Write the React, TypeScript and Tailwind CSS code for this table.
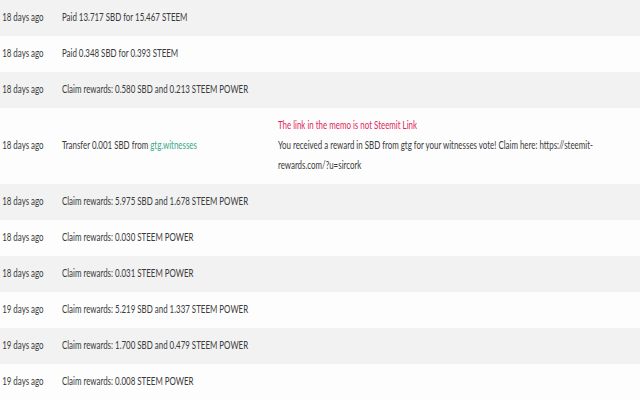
const ROWS = [
  { when: "18 days ago", text: "Paid 13.717 SBD for 15.467 STEEM" },
  { when: "18 days ago", text: "Paid 0.348 SBD for 0.393 STEEM" },
  { when: "18 days ago", text: "Claim rewards: 0.580 SBD and 0.213 STEEM POWER" },
  { when: "18 days ago", text: "Transfer 0.001 SBD from ", link: "gtg.witnesses", memo: true },
  { when: "18 days ago", text: "Claim rewards: 5.975 SBD and 1.678 STEEM POWER" },
  { when: "18 days ago", text: "Claim rewards: 0.030 STEEM POWER" },
  { when: "18 days ago", text: "Claim rewards: 0.031 STEEM POWER" },
  { when: "19 days ago", text: "Claim rewards: 5.219 SBD and 1.337 STEEM POWER" },
  { when: "19 days ago", text: "Claim rewards: 1.700 SBD and 0.479 STEEM POWER" },
  { when: "19 days ago", text: "Claim rewards: 0.008 STEEM POWER" },
];

// the history table is drawn narrow, so lay it out wide and squeeze it horizontally
export default function App() {
  return (
    <div className="w-[640px] h-[400px] overflow-hidden bg-[#fdfdfd]">
      <div
        className="w-[889px] origin-top-left scale-x-[0.72] text-[#3a3a3a] text-[11px] leading-[20px]"
        style={{ fontFamily: 'Lato, "Open Sans", sans-serif' }}
      >
        {ROWS.map((r, i) => (
          <div key={i} className={`flex items-center pt-[7px] pb-[9px] ${i % 2 === 0 ? "bg-[#f2f2f2]" : "bg-[#fdfdfd]"}`}>
            <div className="w-[86px] shrink-0 pl-[3px] whitespace-nowrap">{r.when}</div>
            <div className="w-[300px] shrink-0 whitespace-nowrap">
              {r.text}
              {r.link && <span className="text-[#3aa88b]">{r.link}</span>}
            </div>
            {r.memo && (
              <div className="w-[460px]">
                <div className="text-[#e2245a]">The link in the memo is not Steemit Link</div>
                <div>You received a reward in SBD from gtg for your witnesses vote! Claim here: https://steemit-rewards.com/?u=sircork</div>
              </div>
            )}
          </div>
        ))}
      </div>
    </div>
  );
}
